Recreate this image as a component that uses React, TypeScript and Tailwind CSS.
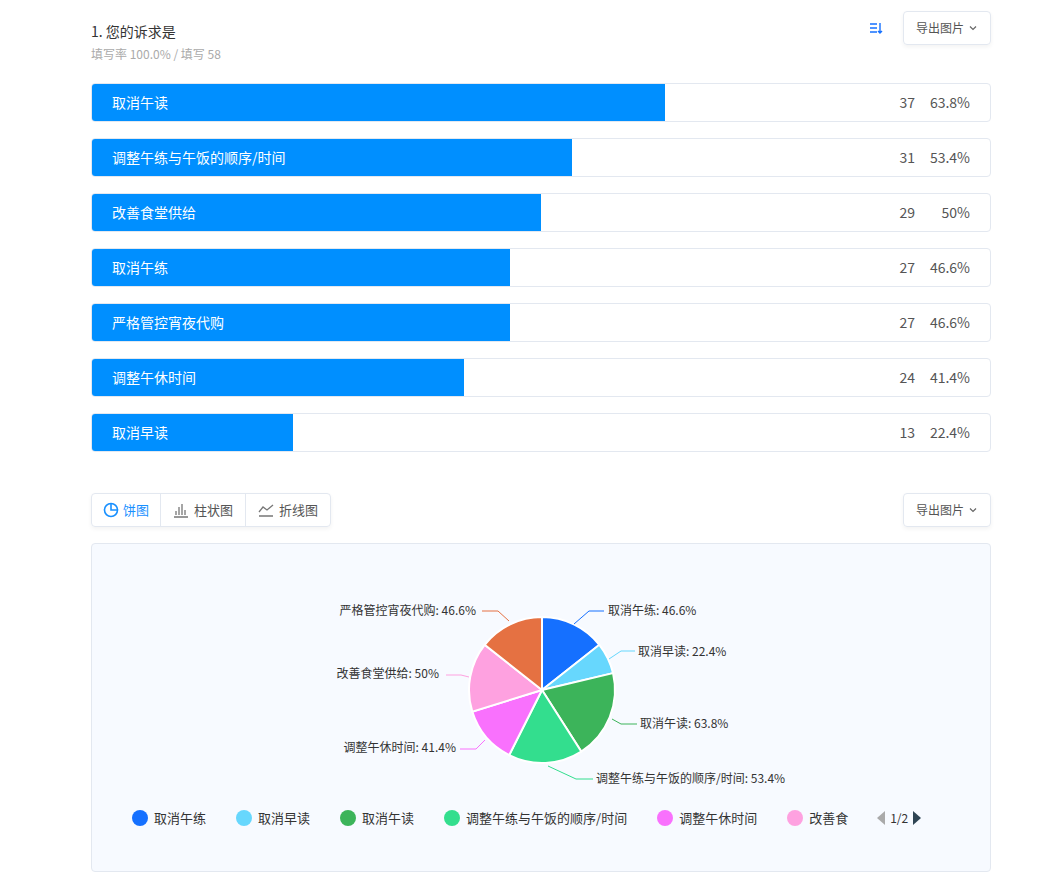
import React from "react";

const rows = [
  ["取消午读", 37, "63.8%", 63.8],
  ["调整午练与午饭的顺序/时间", 31, "53.4%", 53.4],
  ["改善食堂供给", 29, "50%", 50],
  ["取消午练", 27, "46.6%", 46.6],
  ["严格管控宵夜代购", 27, "46.6%", 46.6],
  ["调整午休时间", 24, "41.4%", 41.4],
  ["取消早读", 13, "22.4%", 22.4],
] as const;

const slices = [
  { v: 46.6, c: "#1570ff" },
  { v: 22.4, c: "#67d7fd" },
  { v: 63.8, c: "#3cb45a" },
  { v: 53.4, c: "#33de8e" },
  { v: 41.4, c: "#f971fd" },
  { v: 50, c: "#fea1e0" },
  { v: 46.6, c: "#e57142" },
];

function Pie() {
  const cx = 541, cy = 692, r = 73;
  const total = slices.reduce((a, s) => a + s.v, 0);
  let a0 = -Math.PI / 2;
  const paths = slices.map((s, i) => {
    const a1 = a0 + (s.v / total) * Math.PI * 2;
    const x0 = cx + r * Math.cos(a0), y0 = cy + r * Math.sin(a0);
    const x1 = cx + r * Math.cos(a1), y1 = cy + r * Math.sin(a1);
    const large = a1 - a0 > Math.PI ? 1 : 0;
    const d = `M${cx},${cy} L${x0},${y0} A${r},${r} 0 ${large} 1 ${x1},${y1} Z`;
    a0 = a1;
    return <path key={i} d={d} fill={s.c} stroke="#fff" strokeWidth={2} />;
  });
  const t = { fontSize: 12, fill: "#333", fontFamily: "'Noto Sans CJK SC', sans-serif" } as const;
  return (
    <svg width="1046" height="889" viewBox="0 0 1046 889" className="absolute left-0 top-0 pointer-events-none" style={{ left: -91, top: -546 }}>
      {paths}
      <polyline points="573,626 588,613 603,613" fill="none" stroke="#1570ff" />
      <text x="607" y="617" {...t}>取消午练: 46.6%</text>
      <polyline points="608,661 620,653 634,653" fill="none" stroke="#67d7fd" />
      <text x="637" y="658" {...t}>取消早读: 22.4%</text>
      <polyline points="611,721 620,726 636,726" fill="none" stroke="#3cb45a" />
      <text x="639" y="730" {...t}>取消午读: 63.8%</text>
      <polyline points="547,768 575,781 592,781" fill="none" stroke="#33de8e" />
      <text x="595" y="785" {...t}>调整午练与午饭的顺序/时间: 53.4%</text>
      <polyline points="484,742 475,751 459,751" fill="none" stroke="#f971fd" />
      <text x="455" y="754" {...t} textAnchor="end">调整午休时间: 41.4%</text>
      <polyline points="468,679 460,677 445,677" fill="none" stroke="#fea1e0" />
      <text x="438" y="680" {...t} textAnchor="end">改善食堂供给: 50%</text>
      <polyline points="508,623 497,613 481,613" fill="none" stroke="#e57142" />
      <text x="475" y="617" {...t} textAnchor="end">严格管控宵夜代购: 46.6%</text>
    </svg>
  );
}

const Chevron = () => (
  <svg width="10" height="10" viewBox="0 0 10 10" className="ml-1"><path d="M2 3.5 L5 6.5 L8 3.5" fill="none" stroke="#666" strokeWidth="1.2" /></svg>
);

export default function App() {
  const legend = [
    ["#1570ff", "取消午练"], ["#67d7fd", "取消早读"], ["#3cb45a", "取消午读"],
    ["#33de8e", "调整午练与午饭的顺序/时间"], ["#f971fd", "调整午休时间"], ["#fea1e0", "改善食"],
  ];
  return (
    <div className="w-[1046px] h-[889px] bg-white relative" style={{ fontFamily: "'Noto Sans CJK SC', 'Noto Sans', sans-serif" }}>
      <div className="ml-[91px] w-[900px] pt-[11px]">
        <div className="flex justify-between items-start">
          <div>
            <div className="text-[14px] text-[#333] mt-[10px] leading-[20px]">1. 您的诉求是</div>
            <div className="text-[12px] text-[#aaa] mt-[5px] leading-[16px]">填写率 100.0% / 填写 58</div>
          </div>
          <div className="flex items-center">
            <svg width="14" height="14" viewBox="0 0 14 14" className="mr-[20px]"><path d="M1 3h7M1 7h7M1 11h7M11 2v10M9 10l2 2 2-2" fill="none" stroke="#1570ff" strokeWidth="1.4" /></svg>
            <div className="h-[34px] px-[12px] flex items-center border border-[#e3e8f0] rounded-[4px] text-[12px] text-[#555] shadow-[0_2px_4px_rgba(0,0,0,0.05)]">导出图片<Chevron /></div>
          </div>
        </div>
        <div className="mt-[21px] flex flex-col gap-[16px]">
          {rows.map(([name, n, p, v]) => (
            <div key={name} className="h-[39px] border border-[#e3e8f0] rounded-[4px] relative flex items-center overflow-hidden">
              <div className="absolute left-0 top-0 bottom-0 bg-[#008fff]" style={{ width: `${v}%` }} />
              <div className="relative text-white text-[14px] pl-[20px] flex-1">{name}</div>
              <div className="relative text-[14px] text-[#555] w-[40px] text-right">{n}</div>
              <div className="relative text-[14px] text-[#555] w-[75px] text-right pr-[20px]">{p}</div>
            </div>
          ))}
        </div>
        <div className="mt-[41px] flex justify-between">
          <div className="flex h-[34px] border border-[#e3e8f0] rounded-[4px] text-[13px] text-[#555] shadow-[0_2px_4px_rgba(0,0,0,0.05)]">
            <div className="flex items-center px-[11px] text-[#1890ff] gap-[4px]">
              <svg width="16" height="16" viewBox="0 0 16 16"><circle cx="8" cy="8" r="6.5" fill="none" stroke="#1890ff" strokeWidth="1.6" /><path d="M8 1.5V8h6.5" fill="none" stroke="#1890ff" strokeWidth="1.6" /></svg>饼图
            </div>
            <div className="flex items-center px-[12px] gap-[5px] border-l border-[#e3e8f0]">
              <svg width="16" height="16" viewBox="0 0 16 16"><path d="M1 15h14M3 13V9M6 13V5M9 13V2M12 13V8" stroke="#777" strokeWidth="1.3" fill="none" /></svg>柱状图
            </div>
            <div className="flex items-center px-[12px] gap-[5px] border-l border-[#e3e8f0]">
              <svg width="16" height="16" viewBox="0 0 16 16"><path d="M1 14h14M1 10l4-5 4 3 6-5" stroke="#777" strokeWidth="1.3" fill="none" /></svg>折线图
            </div>
          </div>
          <div className="h-[34px] px-[12px] flex items-center border border-[#e3e8f0] rounded-[4px] text-[12px] text-[#555] shadow-[0_2px_4px_rgba(0,0,0,0.05)]">导出图片<Chevron /></div>
        </div>
        <div className="mt-[16px] h-[329px] border border-[#e3e8f0] rounded-[4px] bg-[#f7faff] relative overflow-hidden">
          <Pie />
          <div className="absolute left-[40px] top-[264px] flex items-center text-[13px] text-[#333]">
            {legend.map(([c, l]) => (
              <div key={l} className="flex items-center mr-[30px]">
                <span className="w-[16px] h-[16px] rounded-full mr-[6px]" style={{ background: c }} />{l}
              </div>
            ))}
            <div className="flex items-center gap-[4px] -ml-[2px]">
              <svg width="10" height="14"><path d="M9 0v14L1 7z" fill="#aaa" /></svg>
              <span className="text-[12px]">1/2</span>
              <svg width="10" height="14"><path d="M1 0v14l8-7z" fill="#2f4554" /></svg>
            </div>
          </div>
        </div>
      </div>
    </div>
  );
}
